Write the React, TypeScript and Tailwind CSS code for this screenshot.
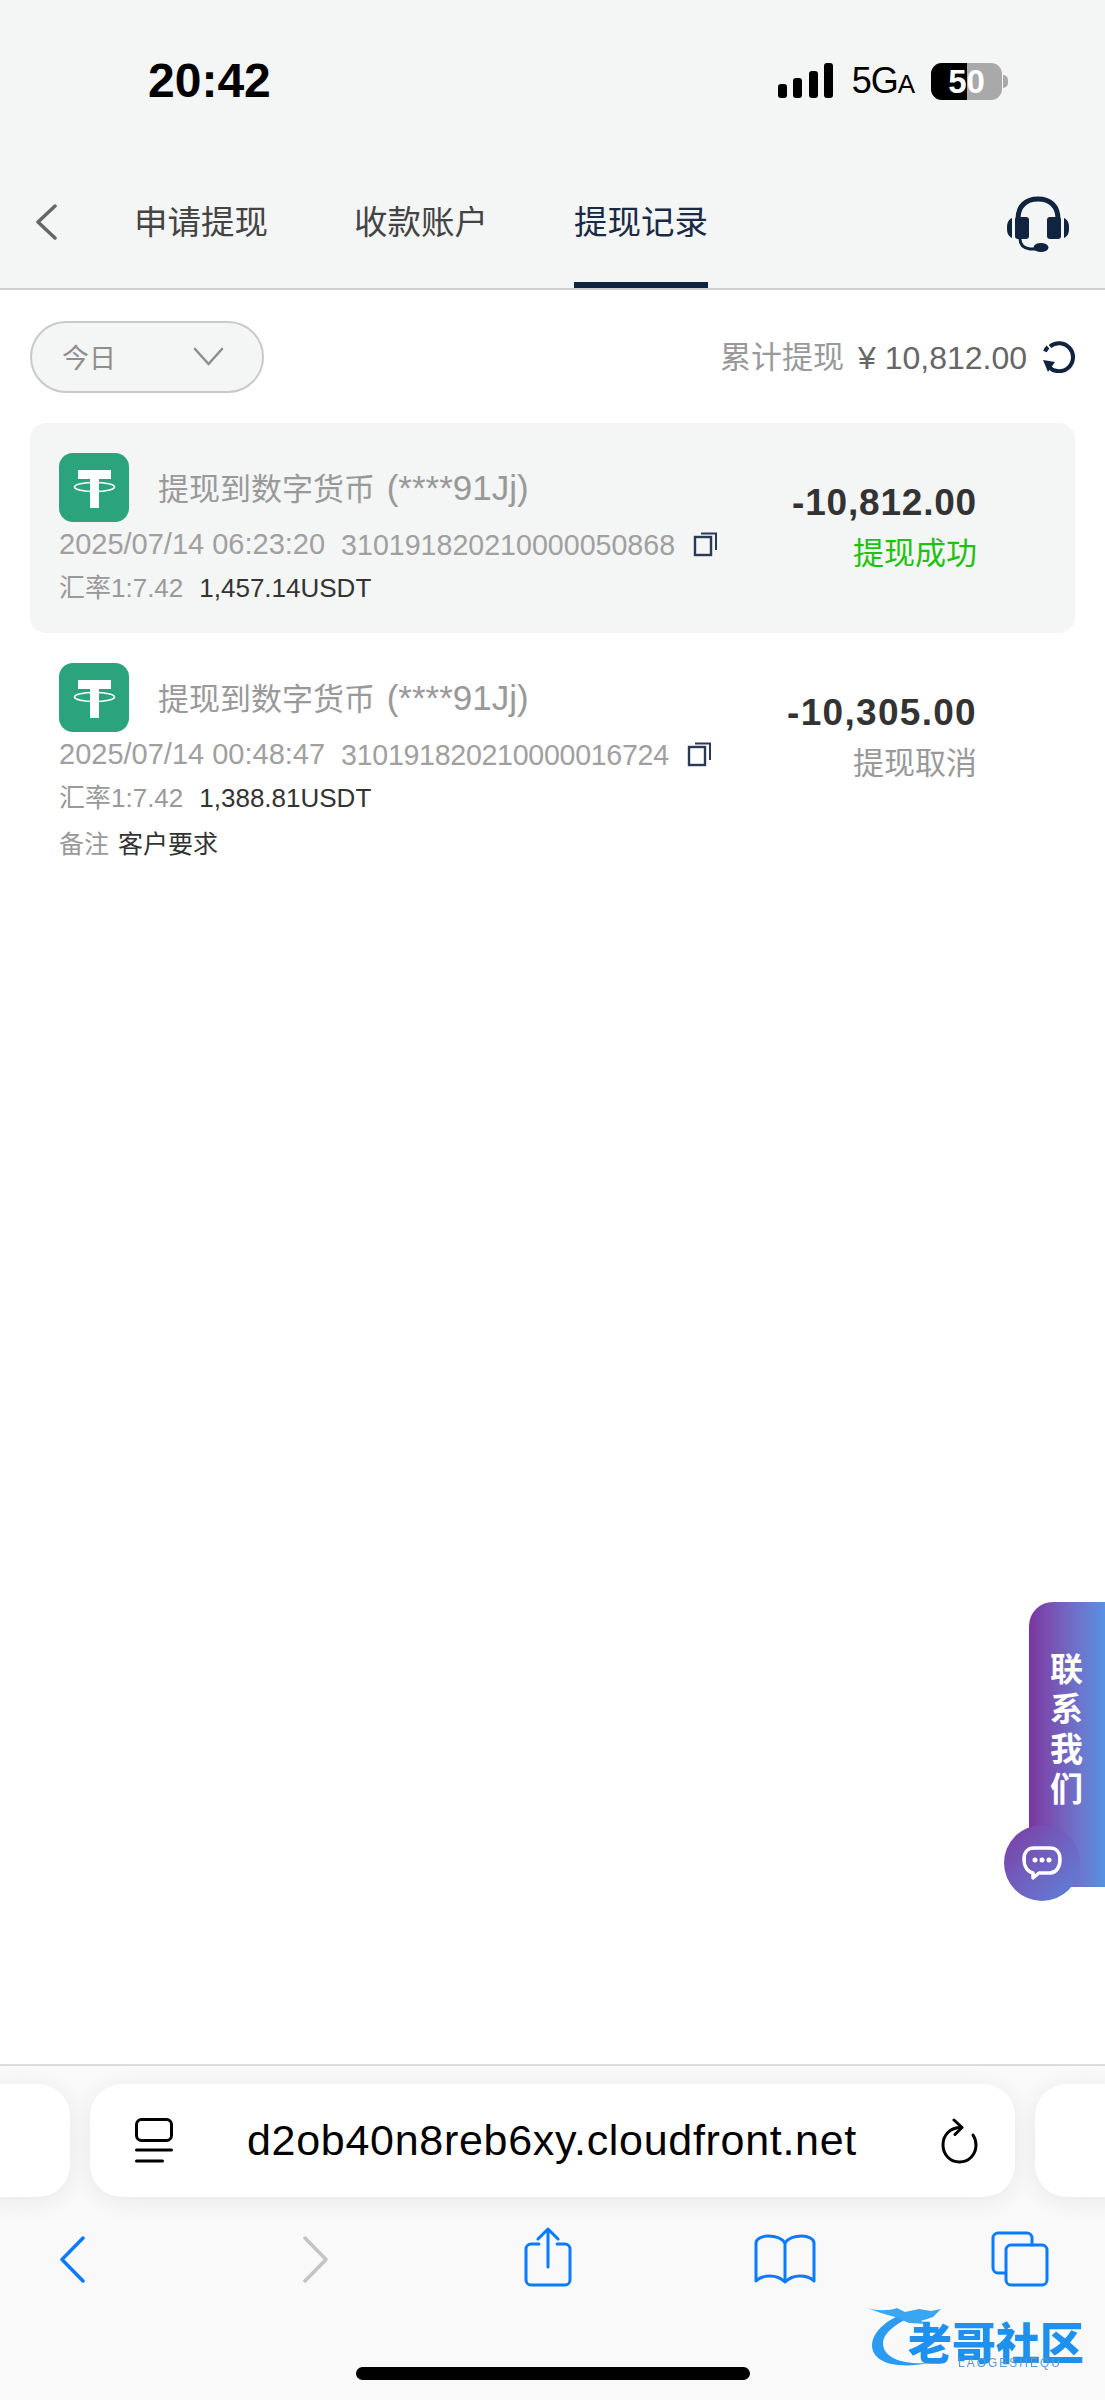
const SANS = "font-['Liberation_Sans','Noto_Sans_CJK_SC',sans-serif]";

const TABS = [
  { label: "申请提现", active: false },
  { label: "收款账户", active: false },
  { label: "提现记录", active: true },
];

interface Record {
  time: string;
  order: string;
  orderClass: string;
  usdt: string;
  amount: string;
  amountClass: string;
  status: string;
  statusClass: string;
  note?: string;
  active?: boolean;
}

const RECORDS: Record[] = [
  {
    time: "2025/07/14 06:23:20",
    order: "310191820210000050868",
    orderClass: "tracking-[0px]",
    usdt: "1,457.14USDT",
    amount: "-10,812.00",
    amountClass: "tracking-[0.8px]",
    status: "提现成功",
    statusClass: "text-[#1fc112]",
    active: true,
  },
  {
    time: "2025/07/14 00:48:47",
    order: "310191820210000016724",
    orderClass: "tracking-[-0.3px]",
    usdt: "1,388.81USDT",
    amount: "-10,305.00",
    amountClass: "tracking-[1.3px]",
    status: "提现取消",
    statusClass: "text-[#999999]",
    note: "客户要求",
  },
];

function TetherIcon() {
  return (
    <div className="w-[70px] h-[69px] rounded-[14px] bg-[#2ba47e] shrink-0 flex items-center justify-center">
      <svg width="70" height="69" viewBox="0 0 70 69" fill="none">
        <path d="M19 17h33v9H40v9h-9v-9H19z" fill="#fff" />
        <path d="M31 33h9v22h-9z" fill="#fff" />
        <ellipse cx="35.5" cy="34" rx="20" ry="4.5" stroke="#fff" strokeWidth="1.6" />
      </svg>
    </div>
  );
}

function CopyIcon() {
  return (
    <svg width="25" height="25" viewBox="0 0 25 25" fill="none" stroke="#2a3a55" className="shrink-0 ml-[18px] -mt-[2px]">
      <rect x="2" y="5" width="16" height="18" strokeWidth="2.4" />
      <path d="M8 1.5h15V18" strokeWidth="2" />
    </svg>
  );
}

function Headset() {
  return (
    <svg width="64" height="56" viewBox="0 0 64 56" fill="#10233f">
      <path d="M12 26V23C12 10 20 3 32 3s20 7 20 20v3" fill="none" stroke="#10233f" strokeWidth="5" />
      <rect x="9" y="21" width="14" height="22" rx="3" />
      <rect x="41" y="21" width="14" height="22" rx="3" />
      <path d="M6 22C2 24 1 27 1 32s1 8 5 10z" />
      <path d="M58 22c4 2 5 5 5 10s-1 8-5 10z" />
      <path d="M14 43c0 6 3 9 10 10h6" fill="none" stroke="#10233f" strokeWidth="3" />
      <ellipse cx="35" cy="51.5" rx="7.5" ry="4.5" />
    </svg>
  );
}

export default function App() {
  return (
    <div className={`${SANS} relative w-[1105px] h-[2400px] bg-white flex flex-col overflow-hidden`}>
      {/* Header */}
      <header className="bg-[#f4f5f5] h-[290px] border-b-2 border-[#cfd0d0] shrink-0">
        <div className="h-[162px] flex items-center pl-[148px] pr-[97px]">
          <span className="text-[48px] font-bold text-black">20:42</span>
          <div className="ml-auto flex items-center">
            <svg width="56" height="36" viewBox="0 0 56 36" fill="#000">
              <rect x="0" y="21" width="9" height="14" rx="3" />
              <rect x="15" y="15" width="9" height="20" rx="3" />
              <rect x="31" y="8" width="9" height="27" rx="3" />
              <rect x="46" y="0" width="9" height="35" rx="3" />
            </svg>
            <span className="ml-[18px] text-[36px] text-black leading-none tracking-[-1px] font-medium">
              5G<span className="text-[26px]">A</span>
            </span>
            <div className="ml-[17px] w-[71px] h-[37px] rounded-[11px] overflow-hidden bg-[#a9a9a9] flex relative">
              <div className="w-[36px] bg-black" />
              <span className="absolute inset-0 flex items-center justify-center text-[33px] font-bold text-white leading-none">50</span>
            </div>
            <div className="ml-[1px] w-[5px] h-[13px] rounded-r-full bg-[#a9a9a9]" />
          </div>
        </div>
        <nav className="h-[126px] flex pl-[35px] pr-[35px]">
          <svg width="23" height="36" viewBox="0 0 23 36" fill="none" stroke="#666" strokeWidth="3.5" strokeLinecap="round" strokeLinejoin="round" className="mt-[42px]">
            <path d="M20 2 3 18l17 16" />
          </svg>
          <div className="ml-[76px] flex gap-[86px]">
            {TABS.map(t => (
              <div
                key={t.label}
                className={`h-[126px] pt-[2px] flex items-center border-b-[6px] text-[33.500px] ${t.active ? "border-[#10233f] text-[#1a2a44]" : "border-transparent text-[#444444]"}`}
              >
                {t.label}
              </div>
            ))}
          </div>
          <div className="ml-auto mt-[34px]">
            <Headset />
          </div>
        </nav>
      </header>

      {/* Filter row */}
      <div className="h-[133px] flex items-center justify-between px-[30px] shrink-0">
        <div className="w-[234px] h-[72px] rounded-full bg-[#f4f5f5] border-2 border-[#c9c9c9] flex items-center justify-between pl-[30px] pr-[38px]">
          <span className="text-[27px] text-[#8f8f8f] pt-[5px]">今日</span>
          <svg width="31" height="19" viewBox="0 0 31 19" fill="none" stroke="#8f8f8f" strokeWidth="2.6" strokeLinecap="round" strokeLinejoin="round">
            <path d="M2 2l13.500 15L29 2" />
          </svg>
        </div>
        <div className="flex items-center">
          <span className="text-[31px] text-[#999999] pt-[4px]">累计提现</span>
          <span className="ml-[14px] text-[32px] text-[#666666] pt-[2px]">¥ 10,812.00</span>
          <svg width="33" height="33" viewBox="0 0 33 33" fill="none" className="ml-[15px]">
            <path d="M8 6.500A14 14 0 1 1 7 27" stroke="#10233f" strokeWidth="4" />
            <path d="M3 11.500A14 14 0 0 1 6 7" stroke="#10233f" strokeWidth="4" />
            <path d="M1 20l12 2-7 10z" fill="#10233f" />
          </svg>
        </div>
      </div>

      {/* Records */}
      <div className="px-[30px] shrink-0">
        {RECORDS.map(r => (
          <div
            key={r.order}
            className={`flex justify-between rounded-[16px] pl-[29px] pr-[98px] pt-[30px] pb-[27px] ${r.active ? "bg-[#f4f5f5]" : ""}`}
          >
            <div>
              <div className="h-[69px] flex items-center">
                <TetherIcon />
                <span className="ml-[29px] mt-[2px] text-[31px] text-[#999999] whitespace-nowrap">
                  提现到数字货币 <span className="ml-[3px] text-[35px]">(****91Jj)</span>
                </span>
              </div>
              <div className="h-[46px] flex items-center text-[#a0a0a0] whitespace-nowrap">
                <span className="text-[29px]">{r.time}</span>
                <span className={`ml-[16px] text-[28.600px] ${r.orderClass}`}>{r.order}</span>
                <CopyIcon />
              </div>
              <div className="h-[38px] pt-[2px] flex items-center text-[26px] whitespace-nowrap">
                <span className="text-[#999999]">汇率1:7.42</span>
                <span className="ml-[16px] text-[#333333]">{r.usdt}</span>
              </div>
              {r.note && (
                <div className="h-[54px] pt-[3px] flex items-center text-[25px] whitespace-nowrap">
                  <span className="text-[#999999]">备注</span>
                  <span className="ml-[9px] text-[#333333]">{r.note}</span>
                </div>
              )}
            </div>
            <div className="pt-[25px] flex flex-col items-end">
              <div className={`h-[50px] flex items-center text-[37px] font-bold text-[#333333] ${r.amountClass}`}>{r.amount}</div>
              <div className={`h-[50px] pt-[2px] flex items-center text-[31px] ${r.statusClass}`}>{r.status}</div>
            </div>
          </div>
        ))}
      </div>

      <div className="flex-1" />

      {/* Safari toolbar */}
      <footer className="h-[336px] shrink-0 border-t-2 border-[#dcdcdc] bg-[#f9f9f9]">
        <div className="pt-[18px] flex h-[131px] gap-[20px] -ml-[30px]">
          <div className="w-[100px] shrink-0 rounded-[32px] bg-white shadow-[0_4px_24px_rgba(0,0,0,0.07)]" />
          <div className="w-[925px] shrink-0 rounded-[32px] bg-white shadow-[0_4px_24px_rgba(0,0,0,0.07)] flex items-center pl-[45px] pr-[37px]">
            <svg width="38" height="45" viewBox="0 0 38 45" fill="none" stroke="#000" strokeLinecap="round">
              <rect x="1.500" y="1.500" width="35" height="21" rx="5" strokeWidth="3" />
              <path d="M1.500 32h35" strokeWidth="3" />
              <path d="M1.500 43h26" strokeWidth="3" />
            </svg>
            <span className="ml-[74px] text-[43px] tracking-[0.7px] text-black whitespace-nowrap">d2ob40n8reb6xy.cloudfront.net</span>
            <svg width="37" height="46" viewBox="0 0 37 46" fill="none" stroke="#000" strokeWidth="3" strokeLinecap="round" strokeLinejoin="round" className="ml-auto shrink-0">
              <path d="M20 9.500C9 9.500 2 17 2 27c0 10 7.500 17 16.500 17S35 37 35 27c0-4-1-7-3-10" />
              <path d="M13 2l8 7.500-7 7" />
            </svg>
          </div>
          <div className="w-[100px] shrink-0 rounded-[32px] bg-white shadow-[0_4px_24px_rgba(0,0,0,0.07)]" />
        </div>
        <div className="relative h-[62px] mt-[36px] flex items-start">
          <svg width="27" height="47" viewBox="0 0 27 47" fill="none" stroke="#0a7aff" strokeWidth="3.500" strokeLinecap="round" strokeLinejoin="round" className="ml-[59px] mt-[3px]">
            <path d="M24 2 3 23.500 24 45" />
          </svg>
          <svg width="27" height="47" viewBox="0 0 27 47" fill="none" stroke="#c4c4c4" strokeWidth="3.500" strokeLinecap="round" strokeLinejoin="round" className="ml-[216px] mt-[3px]">
            <path d="M3 2l21 21.500L3 45" />
          </svg>
          <svg width="48" height="60" viewBox="0 0 48 60" fill="none" stroke="#0a7aff" strokeWidth="3" strokeLinecap="round" strokeLinejoin="round" className="ml-[195px] -mt-[6px]">
            <path d="M15 17H7a5 5 0 0 0-5 5v31a5 5 0 0 0 5 5h34a5 5 0 0 0 5-5V22a5 5 0 0 0-5-5h-8" />
            <path d="M24 40V2M14 12 24 2l10 10" />
          </svg>
          <svg width="62" height="50" viewBox="0 0 62 50" fill="none" stroke="#0a7aff" strokeWidth="3" strokeLinecap="round" strokeLinejoin="round" className="ml-[182px] mt-[1px]">
            <path d="M31 9C27 3 20 2 14 2 8 2 2 5 2 9v38c4-4 9-5 14-5 6 0 11 2 15 6 4-4 9-6 15-6 5 0 10 1 14 5V9c0-4-6-7-12-7-6 0-13 1-17 7z" />
            <path d="M31 9v38" />
          </svg>
          <svg width="58" height="56" viewBox="0 0 58 56" fill="none" stroke="#0a7aff" strokeWidth="3" strokeLinecap="round" strokeLinejoin="round" className="ml-[175px] -mt-[2px]">
            <path d="M14 42H7a5 5 0 0 1-5-5V7a5 5 0 0 1 5-5h29a5 5 0 0 1 5 5v7" />
            <rect x="15" y="14" width="41" height="40" rx="5" />
          </svg>
        </div>
        <div className="mt-[72px] w-[394px] h-[13px] mx-auto rounded-full bg-black" />
      </footer>

      {/* Contact widget */}
      <div className="absolute left-[1029px] top-[1602px] w-[76px] h-[285px] rounded-tl-[24px] rounded-bl-[44px] bg-gradient-to-r from-[#7a35a0] to-[#5592e2] flex flex-col items-start">
        <div className="ml-[21px] mt-[48px] w-[34px] text-[33px] leading-[40px] font-bold text-white">联系我们</div>
      </div>
      <div className="absolute left-[1004px] top-[1825px] w-[76px] h-[76px] rounded-full bg-gradient-to-br from-[#7a3aa4] to-[#5783dc] flex items-center justify-center">
        <svg width="40" height="34" viewBox="0 0 40 34" fill="none">
          <path d="M12 2h16c6 0 10 4 10 11v1c0 7-4 13-10 13H17l-6 5v-5C6 26 2 21 2 14v-1C2 6 6 2 12 2z" stroke="#fff" strokeWidth="3.500" strokeLinejoin="round" />
          <path d="M1 14h3M36 14h3" stroke="#fff" strokeWidth="3" />
          <circle cx="13" cy="14" r="2.500" fill="#fff" />
          <circle cx="20" cy="14" r="2.500" fill="#fff" />
          <circle cx="27" cy="14" r="2.500" fill="#fff" />
        </svg>
      </div>

      {/* Watermark */}
      <div className="absolute left-[867px] top-[2298px] w-[225px] h-[78px] blur-[0.7px]">
        <svg width="90" height="76" viewBox="0 0 90 76" fill="none" className="absolute left-0 top-0">
          <path d="M42 14C22 20 6 32 5 47c0 16 20 25 58 18-28 2-46-5-47-19C16 35 28 26 46 18z" fill="#2a9bf0" />
          <path d="M0 10c10 3 22 3 30 0l8 4 14-3 12 2 10-2 -8 8-12 4 6 3-18-1-14-6-14-4z" fill="#3aa6f2" />
        </svg>
        <div className="absolute left-[41px] top-[27px] text-[44px] leading-[32px] font-black text-[#1e90ee] whitespace-nowrap font-['Noto_Sans_CJK_SC',sans-serif]">老哥社区</div>
        <div className="absolute left-[91px] top-[59px] text-[12px] leading-[12px] tracking-[2px] text-[#5f97cc] whitespace-nowrap">LAOGESHEQU</div>
      </div>
    </div>
  );
}
